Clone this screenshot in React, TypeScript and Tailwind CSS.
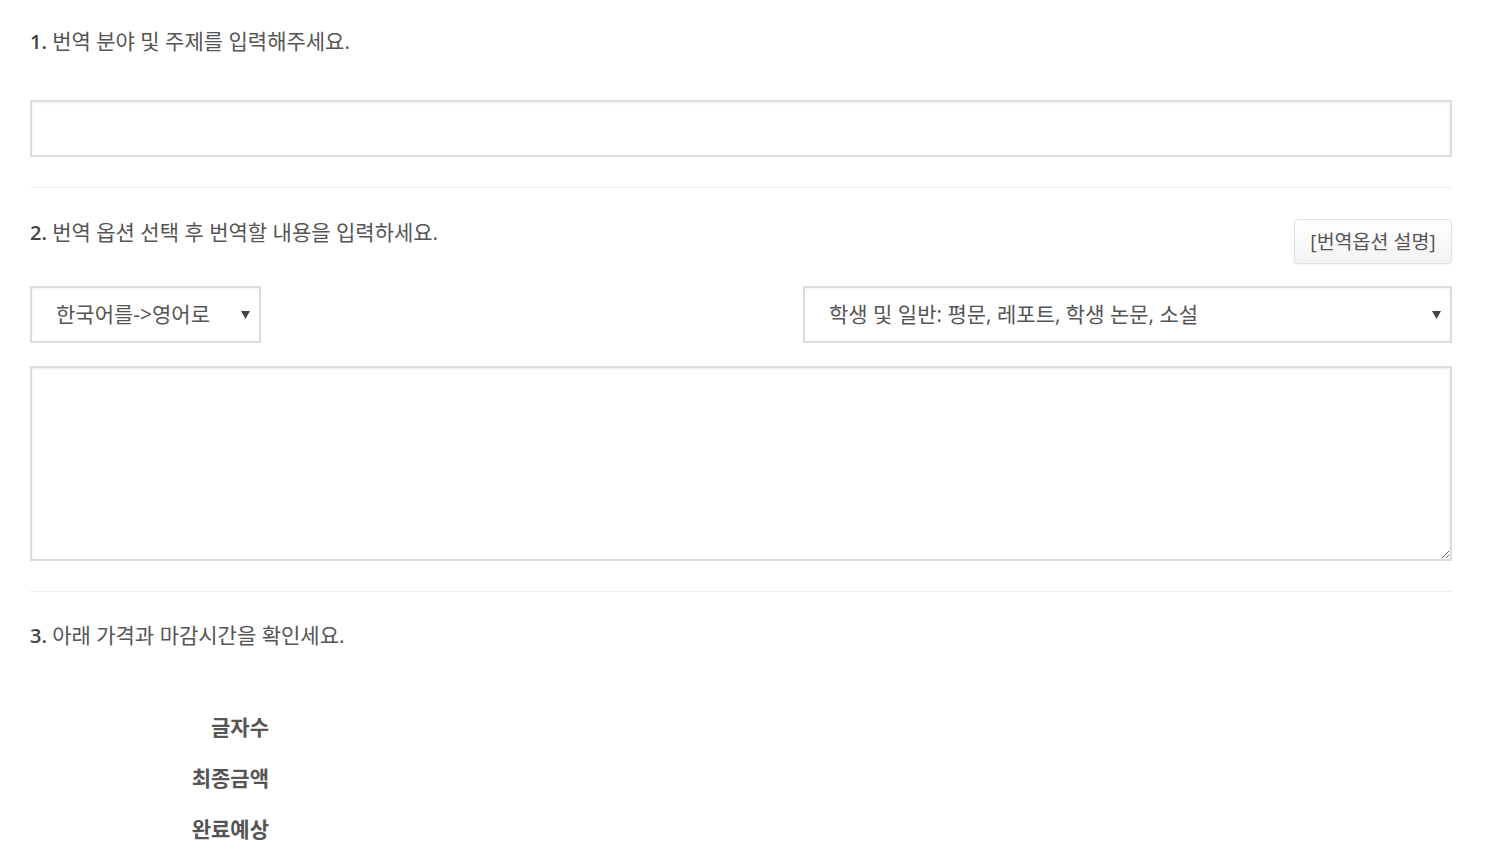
import React from "react";

const font = { fontFamily: '"Open Sans", "Noto Sans CJK KR", sans-serif' };

function Heading({ num, text }: { num: string; text: string }) {
  return (
    <div className="h-[27px] leading-[27px] text-[20px] text-[#555] whitespace-nowrap">
      <span className="font-semibold text-[#444]">{num}</span>{" "}
      <span className="text-[21px]">{text}</span>
    </div>
  );
}

function Arrow() {
  return (
    <svg width="9" height="8" viewBox="0 0 9 8" className="shrink-0">
      <path d="M0 0 L9 0 L4.5 8 Z" fill="#444" />
    </svg>
  );
}

export default function App() {
  return (
    <div className="min-h-[849px] bg-white" style={font}>
      <div className="w-[1422px] ml-[30px] pt-[28px] flex flex-col">
        <Heading num="1." text="번역 분야 및 주제를 입력해주세요." />
        <div className="mt-[45px] h-[57px] border-2 border-[#dcdcdc] shadow-[inset_0_1px_3px_rgba(0,0,0,0.08)]" />
        <div className="mt-[30px] h-px bg-[#eeeeee]" />

        <div className="mt-[31px] flex items-start justify-between">
          <Heading num="2." text="번역 옵션 선택 후 번역할 내용을 입력하세요." />
          <button className="w-[158px] h-[45px] rounded-[4px] border border-[#e0e0e0] bg-gradient-to-b from-white to-[#f3f3f3] shadow-[0_1px_2px_rgba(0,0,0,0.06)] text-[19.5px] text-[#555] flex items-center justify-center">
            [번역옵션 설명]
          </button>
        </div>

        <div className="mt-[22px] flex justify-between">
          <div className="w-[231px] h-[57px] border-2 border-[#dcdcdc] flex items-center justify-between pl-[24px] pr-[9px] text-[21px] text-[#555] shadow-[inset_0_1px_3px_rgba(0,0,0,0.06)]">
            <span>한국어를-&gt;영어로</span>
            <Arrow />
          </div>
          <div className="w-[649px] h-[57px] border-2 border-[#dcdcdc] flex items-center justify-between pl-[24px] pr-[9px] text-[21px] text-[#555] shadow-[inset_0_1px_3px_rgba(0,0,0,0.06)]">
            <span>학생 및 일반: 평문, 레포트, 학생 논문, 소설</span>
            <Arrow />
          </div>
        </div>

        <textarea className="mt-[23px] h-[195px] border-2 border-[#dcdcdc] shadow-[inset_0_1px_3px_rgba(0,0,0,0.08)] outline-none resize-y" />

        <div className="mt-[30px] h-px bg-[#eeeeee]" />

        <div className="mt-[30px]">
          <Heading num="3." text="아래 가격과 마감시간을 확인세요." />
        </div>

        <div className="mt-[65px] flex flex-col gap-[24px] w-[239px] text-right text-[21px] font-bold text-[#555]">
          <div className="h-[27px] leading-[27px]">글자수</div>
          <div className="h-[27px] leading-[27px]">최종금액</div>
          <div className="h-[27px] leading-[27px]">완료예상</div>
        </div>
      </div>
    </div>
  );
}
